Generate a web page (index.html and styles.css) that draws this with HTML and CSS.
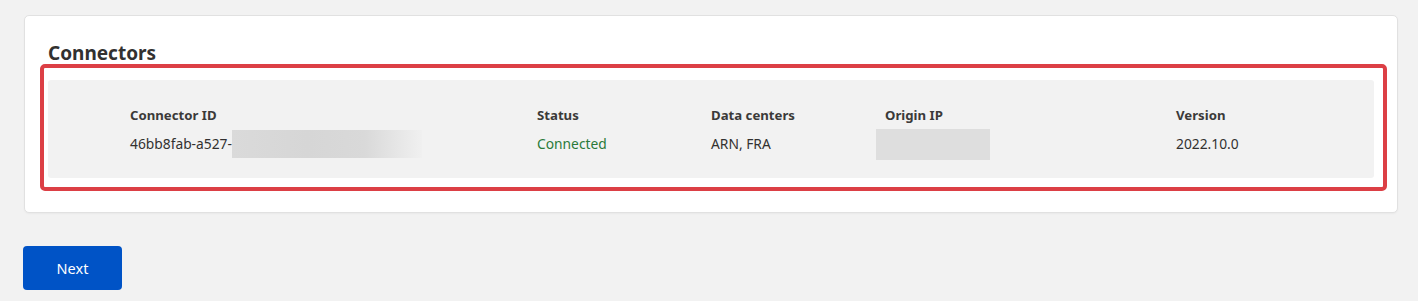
FILE: index.html
```html
<!DOCTYPE html>
<html>
<head>
<meta charset="utf-8">
<link rel="stylesheet" href="styles.css">
</head>
<body>
<div class="page">
  <section class="card">
    <h2 class="title">Connectors</h2>
    <div class="panel-wrap">
      <div class="panel">
        <div class="col col-id">
          <div class="label">Connector ID</div>
          <div class="value">46bb8fab-a527-<span class="redact-id"></span></div>
        </div>
        <div class="col">
          <div class="label">Status</div>
          <div class="value ok">Connected</div>
        </div>
        <div class="col">
          <div class="label">Data centers</div>
          <div class="value">ARN, FRA</div>
        </div>
        <div class="col">
          <div class="label">Origin IP</div>
          <div class="value"><span class="redact-ip"></span></div>
        </div>
        <div class="col">
          <div class="label">Version</div>
          <div class="value">2022.10.0</div>
        </div>
      </div>
      <div class="highlight"></div>
    </div>
  </section>
  <div class="actions">
    <button class="btn-primary">Next</button>
  </div>
</div>
</body>
</html>
```
FILE: styles.css
```css
html, body {
  margin: 0;
  padding: 0;
  background: #f2f2f2;
}
body {
  font-family: "Noto Sans", "Open Sans", sans-serif;
  color: #323130;
}
.page {
  padding: 15px 20px 0 24px;
}
.card {
  background: #fff;
  border: 1px solid #e1e1e1;
  border-radius: 5px;
  padding: 24px 23px 34px 23px;
  box-shadow: 0 1px 2px rgba(0,0,0,0.04);
}
.title {
  margin: 0 0 15px 0;
  font-size: 19px;
  font-weight: 700;
  line-height: 24px;
  color: #323130;
  padding-top: 1px;
}
.panel-wrap {
  position: relative;
}
.panel {
  background: #f2f2f2;
  border-radius: 3px;
  display: grid;
  grid-template-columns: 407px 174px 174px 291px 1fr;
  padding: 25px 0 24px 82px;
  font-size: 13px;
}
.col {
  display: flex;
  flex-direction: column;
  gap: 9px;
}
.label {
  font-weight: 700;
  font-size: 13.2px;
  line-height: 20px;
  color: #3b3a39;
}
.value {
  font-size: 13.8px;
  line-height: 20px;
  height: 20px;
  display: flex;
  align-items: center;
  white-space: nowrap;
}
.ok {
  color: #2a7a3a;
}
.redact-id {
  display: inline-block;
  width: 190px;
  height: 28px;
  background: linear-gradient(90deg, #dadada 0%, #d6d6d6 40%, #d9d9d9 70%, #f0f0f0 100%);
}
.redact-ip {
  display: inline-block;
  width: 114px;
  height: 31px;
  margin-left: -9px;
  background: #dedede;
}
.highlight {
  position: absolute;
  top: -16px;
  left: -8px;
  right: -13px;
  bottom: -13px;
  border: 4px solid #dc3f45;
  border-radius: 5px;
  pointer-events: none;
}
.actions {
  padding-top: 33px;
}
.btn-primary {
  margin-left: -1px;
  width: 99px;
  height: 44px;
  border: none;
  border-radius: 4px;
  background: #0053c6;
  color: #fff;
  font-family: "Noto Sans", "Open Sans", sans-serif;
  font-size: 14.5px;
}
```
